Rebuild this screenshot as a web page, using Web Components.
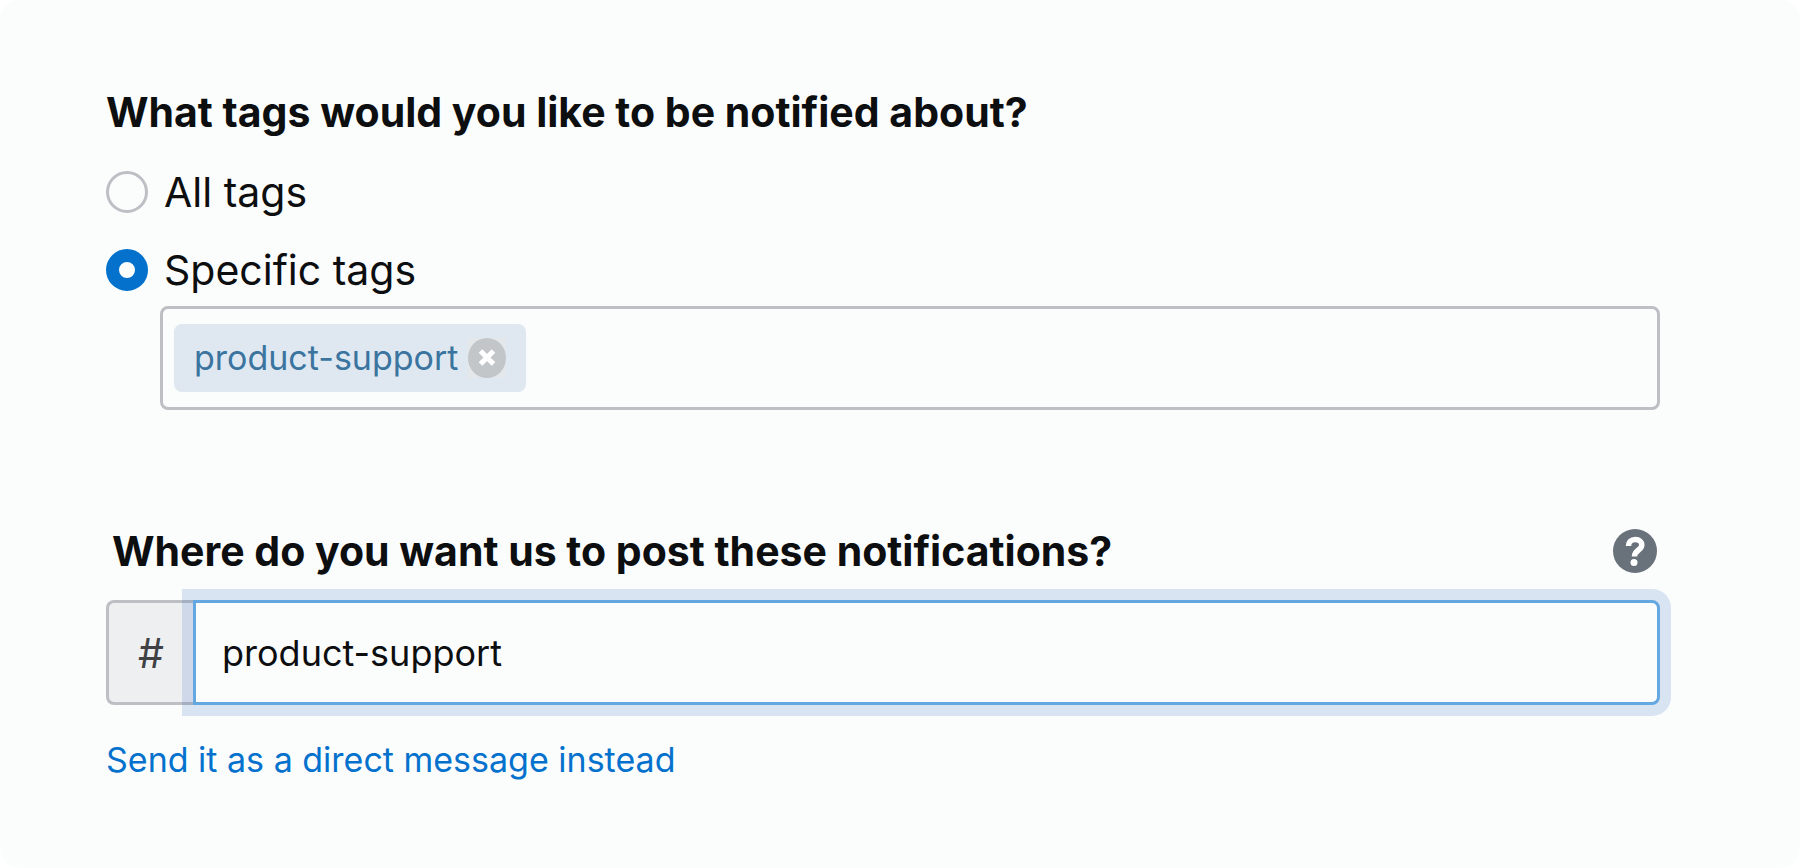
<!DOCTYPE html>
<html lang="en">
<head>
<meta charset="utf-8">
<meta name="viewport" content="width=device-width, initial-scale=1">
<title>Tag notifications</title>
<style>
  html {
    background: #fff;
  }
  body {
    margin: 0;
    color: #0d0e10;
    font-family: Inter, "Liberation Sans", sans-serif;
    --surface: #fbfdfd;
    --blue: #0472cd;
    --line: #bcbfc3;
  }
</style>
</head>
<body>
<notification-settings></notification-settings>

<script>
class RadioOption extends HTMLElement {
  constructor() {
    super();
    this.attachShadow({ mode: 'open' });
  }
  getTemplate() {
    const template = document.createElement('template');
    template.innerHTML = `
      <style>
        :host {
          display: block;
        }
        label {
          display: flex;
          align-items: center;
          gap: 16px;
          font-size: 41px;
          line-height: 50px;
        }
        input {
          appearance: none;
          flex: none;
          box-sizing: border-box;
          width: 42px;
          height: 42px;
          margin: 0;
          border: 3px solid var(--line);
          border-radius: 50%;
        }
        input:checked {
          border: 13px solid var(--blue);
        }
      </style>
      <label>
        <input type="radio" name="scope" ${this.hasAttribute('checked') ? 'checked' : ''}>
        <span><slot></slot></span>
      </label>
    `;
    return template;
  }
  connectedCallback() {
    this.shadowRoot.appendChild(this.getTemplate().content.cloneNode(true));
    this.shadowRoot.querySelector('input').addEventListener('change', () => {
      this.dispatchEvent(new CustomEvent('pick', { bubbles: true }));
    });
  }
  set checked(value) {
    this.shadowRoot.querySelector('input').checked = value;
  }
}
customElements.define('radio-option', RadioOption);

class TagChip extends HTMLElement {
  constructor() {
    super();
    this.attachShadow({ mode: 'open' });
  }
  getTemplate() {
    const template = document.createElement('template');
    template.innerHTML = `
      <style>
        :host {
          display: flex;
          align-items: center;
          gap: 10px;
          box-sizing: border-box;
          height: 68px;
          padding: 0 20px;
          border-radius: 8px;
          background: #dfe8f1;
          color: #3a749f;
          font-size: 34px;
          line-height: 40px;
        }
        button {
          flex: none;
          width: 38px;
          height: 40px;
          padding: 0;
          border: 0;
          background: #e5e8eb;
          cursor: pointer;
        }
        svg {
          display: block;
        }
      </style>
      <span><slot></slot></span>
      <button type="button" aria-label="Remove tag">
        <svg width="38" height="40" viewBox="0 0 38 40" aria-hidden="true">
          <ellipse cx="19" cy="20" rx="19" ry="20" fill="#c3c6c9"/>
          <path d="M12.500 13l13 13M25.500 13l-13 13" stroke="#fff" stroke-width="5"/>
        </svg>
      </button>
    `;
    return template;
  }
  connectedCallback() {
    this.shadowRoot.appendChild(this.getTemplate().content.cloneNode(true));
    this.shadowRoot.querySelector('button').addEventListener('click', () => this.remove());
  }
}
customElements.define('tag-chip', TagChip);

class TagField extends HTMLElement {
  constructor() {
    super();
    this.attachShadow({ mode: 'open' });
  }
  getTemplate() {
    const template = document.createElement('template');
    template.innerHTML = `
      <style>
        :host {
          display: flex;
          align-items: center;
          gap: 12px;
          box-sizing: border-box;
          min-height: 104px;
          padding: 0 11px;
          border: 3px solid var(--line);
          border-radius: 8px;
        }
        input {
          flex: 1;
          min-width: 0;
          padding: 0;
          border: 0;
          outline: 0;
          background: none;
          color: inherit;
          font: inherit;
          font-size: 34px;
        }
      </style>
      <slot></slot>
      <input type="text" aria-label="Add a tag">
    `;
    return template;
  }
  connectedCallback() {
    this.shadowRoot.appendChild(this.getTemplate().content.cloneNode(true));
  }
}
customElements.define('tag-field', TagField);

class HelpButton extends HTMLElement {
  constructor() {
    super();
    this.attachShadow({ mode: 'open' });
  }
  getTemplate() {
    const template = document.createElement('template');
    template.innerHTML = `
      <style>
        :host {
          display: block;
        }
        button {
          display: block;
          padding: 0;
          border: 0;
          background: none;
          cursor: pointer;
        }
        svg {
          display: block;
        }
      </style>
      <button type="button" aria-label="Help">
        <svg width="44" height="44" viewBox="0 0 44 44" aria-hidden="true">
          <circle cx="22" cy="22" r="22" fill="#69717a"/>
          <path d="M15.500 17c0-4 2.600-6.500 6.800-6.500 4 0 6.500 2.200 6.500 5.500 0 5-7.300 5.200-7.300 11.500" fill="none" stroke="#fff" stroke-width="5.500"/>
          <circle cx="21" cy="33.500" r="3.500" fill="#fff"/>
        </svg>
      </button>
    `;
    return template;
  }
  connectedCallback() {
    this.shadowRoot.appendChild(this.getTemplate().content.cloneNode(true));
  }
}
customElements.define('help-button', HelpButton);

class ChannelField extends HTMLElement {
  constructor() {
    super();
    this.attachShadow({ mode: 'open' });
  }
  getTemplate() {
    const template = document.createElement('template');
    template.innerHTML = `
      <style>
        :host {
          display: flex;
          height: 105px;
        }
        span {
          display: flex;
          align-items: center;
          justify-content: center;
          box-sizing: border-box;
          width: 87px;
          border: 3px solid var(--line);
          border-right: 0;
          border-radius: 8px 0 0 8px;
          background: #eeeff1;
          color: #3f4144;
          font-size: 41px;
        }
        input {
          flex: 1;
          box-sizing: border-box;
          min-width: 0;
          margin: 0;
          padding: 0 26px;
          border: 3px solid #65a8e1;
          border-radius: 0 8px 8px 0;
          outline: 0;
          background: var(--surface);
          box-shadow: 0 0 0 11px rgba(29, 90, 190, 0.15);
          color: inherit;
          font: inherit;
          font-size: 36px;
        }
      </style>
      <span>#</span>
      <input type="text" aria-label="Channel" value="${this.getAttribute('value')}">
    `;
    return template;
  }
  connectedCallback() {
    this.shadowRoot.appendChild(this.getTemplate().content.cloneNode(true));
  }
}
customElements.define('channel-field', ChannelField);

class NotificationSettings extends HTMLElement {
  constructor() {
    super();
    this.attachShadow({ mode: 'open' });
  }
  getTemplate() {
    const template = document.createElement('template');
    template.innerHTML = `
      <style>
        :host {
          display: block;
          box-sizing: border-box;
          min-height: 100vh;
          padding: 87px 140px 48px 106px;
          border-radius: 20px;
          background: var(--surface);
        }
        h2 {
          margin: 0;
          font-size: 41px;
          font-weight: 700;
          line-height: 50px;
        }
        .options {
          display: grid;
          gap: 28px;
          margin-top: 30px;
        }
        tag-field {
          margin: 11px 0 0 54px;
        }
        header {
          display: flex;
          align-items: center;
          justify-content: space-between;
          margin-top: 116px;
          padding: 0 3px 0 6px;
        }
        channel-field {
          margin-top: 24px;
        }
        a {
          display: inline-block;
          margin-top: 34px;
          color: var(--blue);
          font-size: 34px;
          line-height: 42px;
          text-decoration: none;
        }
      </style>
      <section>
        <h2>What tags would you like to be notified about?</h2>
        <div class="options">
          <radio-option>All tags</radio-option>
          <radio-option checked>Specific tags</radio-option>
        </div>
        <tag-field>
          <tag-chip>product-support</tag-chip>
        </tag-field>
      </section>
      <section>
        <header>
          <h2>Where do you want us to post these notifications?</h2>
          <help-button></help-button>
        </header>
        <channel-field value="product-support"></channel-field>
        <a href="#direct">Send it as a direct message instead</a>
      </section>
    `;
    return template;
  }
  connectedCallback() {
    this.shadowRoot.appendChild(this.getTemplate().content.cloneNode(true));
    const options = this.shadowRoot.querySelectorAll('radio-option');
    // each radio sits in its own shadow root, so the group is kept here
    this.shadowRoot.addEventListener('pick', event => {
      options.forEach(option => {
        option.checked = option === event.target;
      });
    });
  }
}
customElements.define('notification-settings', NotificationSettings);
</script>
</body>
</html>
